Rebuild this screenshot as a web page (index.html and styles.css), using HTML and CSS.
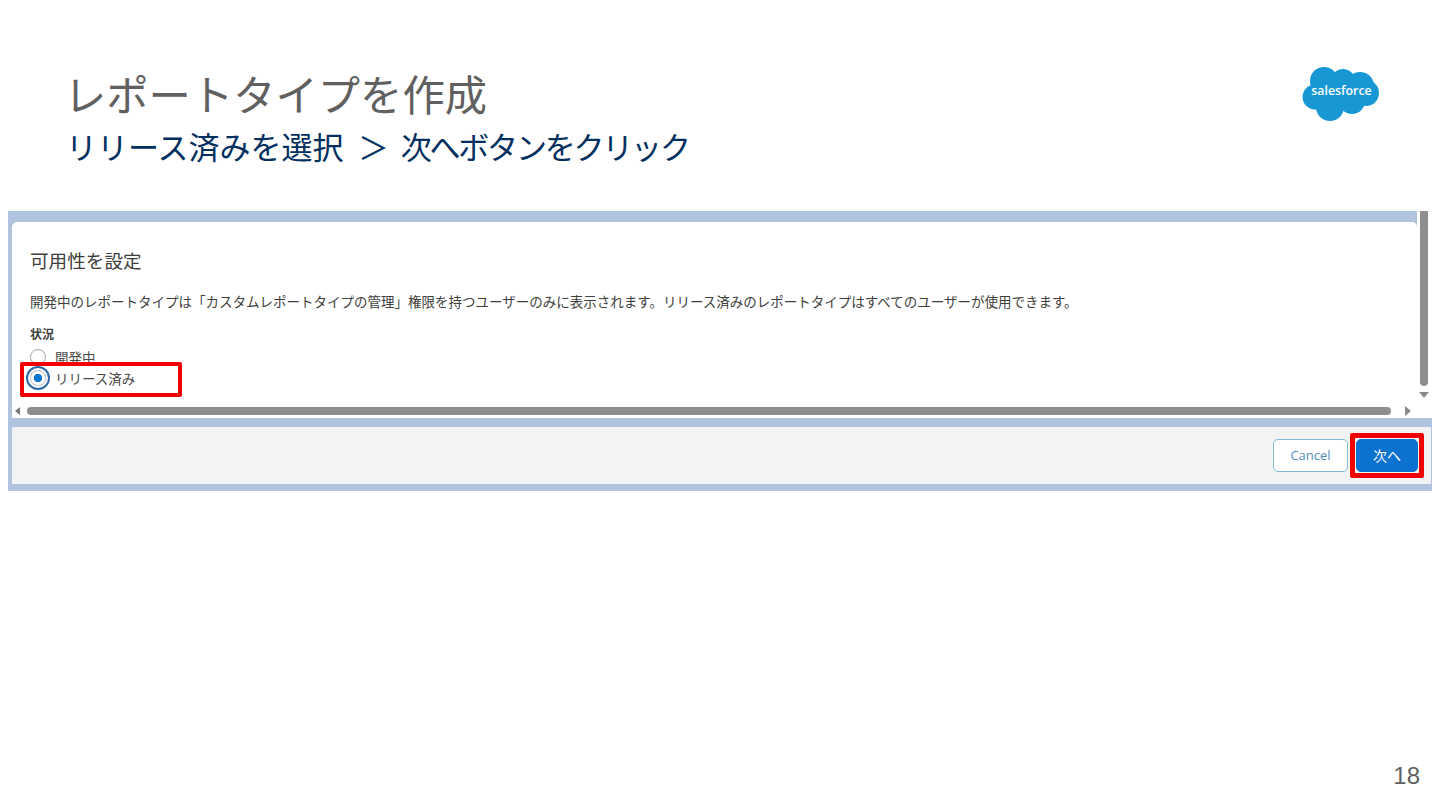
FILE: index.html
```html
<!DOCTYPE html>
<html lang="ja">
<head>
    <meta charset="UTF-8">
    <title>レポートタイプを作成</title>
    <link rel="stylesheet" href="styles.css">
</head>
<body>
    <div class="header">
        <div class="heading">
            <h1 class="title">レポートタイプを作成</h1>
            <div class="subtitle">リリース済みを選択 <span class="subtitle-sep">＞</span> <span class="subtitle-tight">次へボタンをクリック</span></div>
        </div>
        <!-- Logo -->
        <div class="logo">
            <svg class="logo-cloud" width="78" height="56" viewBox="0 0 78 56">
                <g fill="#1798d5">
                    <circle cx="22" cy="15" r="14"/>
                    <circle cx="41" cy="15" r="12"/>
                    <circle cx="58" cy="20" r="14"/>
                    <circle cx="13" cy="31" r="12.5"/>
                    <circle cx="28" cy="41" r="14"/>
                    <circle cx="50" cy="35" r="13"/>
                    <circle cx="64" cy="27" r="13"/>
                    <rect x="14" y="14" width="48" height="26"/>
                </g>
            </svg>
            <span class="logo-text">salesforce</span>
        </div>
    </div>

    <div class="panel">
        <div class="panel-top">
            <div class="panel-main">
                <div class="card">
                    <h2 class="card-title">可用性を設定</h2>
                    <p class="card-text">開発中のレポートタイプは「カスタムレポートタイプの管理」権限を持つユーザーのみに表示されます。リリース済みのレポートタイプはすべてのユーザーが使用できます。</p>
                    <div class="field-label">状況</div>
                    <div class="radio-row radio-row-first">
                        <span class="radio"></span>
                        <span class="radio-label">開発中</span>
                    </div>
                    <div class="radio-row">
                        <span class="radio radio-on"></span>
                        <span class="radio-label">リリース済み</span>
                    </div>
                    <div class="mark mark-radio"></div>
                </div>
                <div class="hscroll">
                    <span class="arrow-left"></span>
                    <span class="hscroll-thumb"></span>
                    <span class="arrow-right"></span>
                </div>
            </div>
            <div class="vscroll">
                <span class="vscroll-thumb"></span>
                <span class="arrow-down"></span>
            </div>
        </div>
        <div class="footer">
            <button class="btn btn-cancel">Cancel</button>
            <div class="next-wrap">
                <button class="btn btn-next">次へ</button>
            </div>
        </div>
    </div>

    <div class="page-num">18</div>
</body>
</html>
```

FILE: styles.css
```css
body {
    font-family: "Liberation Sans", "Noto Sans CJK JP", sans-serif;
    margin: 0;
    background: #ffffff;
    height: 810px;
    overflow: hidden;
    position: relative;
}
.header {
    display: flex;
    justify-content: space-between;
    align-items: flex-start;
    height: 211px;
    box-sizing: border-box;
    padding: 66px 60px 0 66px;
}
.title {
    margin: 3px 0 0 -2px;
    font-size: 42.3px;
    line-height: 56px;
    font-weight: normal;
    color: #606060;
}
.subtitle {
    font-size: 31px;
    line-height: 48px;
    color: #03305f;
    white-space: nowrap;
}
.subtitle-sep {
    margin: 0 3px 0 6px;
}
.subtitle-tight {
    letter-spacing: -2.2px;
}
.logo {
    position: relative;
    width: 78px;
    height: 56px;
}
.logo-cloud {
    display: block;
}
.logo-text {
    position: absolute;
    left: 1px;
    right: 0;
    top: 16px;
    text-align: center;
    font-family: "Open Sans", sans-serif;
    font-size: 12.4px;
    font-weight: 600;
    line-height: 18px;
    color: #ffffff;
}
.panel {
    margin-left: 8px;
    width: 1424px;
    height: 280px;
    background: #b0c4e0;
    display: flex;
    flex-direction: column;
    box-sizing: border-box;
}
.panel-top {
    display: flex;
    height: 207px;
    padding-left: 4px;
}
.panel-main {
    width: 1405px;
    padding-top: 11px;
    display: flex;
    flex-direction: column;
}
.card {
    position: relative;
    flex: 1;
    background: #ffffff;
    border-radius: 5px 5px 0 0;
    padding: 28px 18px 0 18px;
}
.card-title {
    margin: 0;
    font-size: 18.6px;
    line-height: 24px;
    font-weight: normal;
    color: #3e3e3c;
}
.card-text {
    margin: 19px 0 0 0;
    font-size: 13.5px;
    line-height: 20px;
    color: #3e3e3c;
    white-space: nowrap;
}
.field-label {
    margin-top: 13px;
    font-size: 12px;
    line-height: 18px;
    font-weight: bold;
    color: #3e3e3c;
}
.radio-row {
    display: flex;
    align-items: center;
    gap: 9px;
    height: 22px;
    font-size: 13.5px;
}
.radio-row-first {
    margin-top: 3px;
    height: 20px;
}
.radio {
    flex: none;
    width: 16px;
    height: 16px;
    box-sizing: border-box;
    border: 1px solid #a8a8a8;
    border-radius: 50%;
    background: #ffffff;
}
.radio-on {
    border-color: #c4ccd6;
    background: radial-gradient(circle, #0b78d0 0 4px, #ffffff 4.5px);
    box-shadow: 0 0 0 2px #ffffff, 0 0 0 4px #2a6aa8;
}
.radio-label {
    color: #4a4a4a;
}
.mark {
    position: absolute;
    box-sizing: border-box;
    border: 4px solid #f20000;
    border-radius: 2px;
}
.mark-radio {
    left: 8px;
    top: 140px;
    width: 162px;
    height: 35px;
}
.hscroll {
    display: flex;
    align-items: center;
    height: 14px;
    background: #ffffff;
    padding: 0 6px 0 3px;
    gap: 7px;
}
.hscroll-thumb {
    width: 1366px;
    height: 8px;
    background: #8e8e8e;
    border-radius: 4px;
}
.arrow-left {
    border: 4px solid transparent;
    border-left: 0;
    border-right: 5px solid #777777;
}
.arrow-right {
    margin-left: 7px;
    border: 5px solid transparent;
    border-right: 0;
    border-left: 6px solid #8a8a8a;
}
.vscroll {
    flex: 1;
    background: #ffffff;
    display: flex;
    flex-direction: column;
    align-items: center;
    padding: 0 5px 20px 0;
    margin-right: 1px;
    border-left: 2px solid #ffffff;
}
.vscroll-thumb {
    width: 8px;
    height: 177px;
    background: #8e8e8e;
    border-radius: 0 0 4px 4px;
}
.arrow-down {
    margin-top: 6px;
    border: 5px solid transparent;
    border-bottom: 0;
    border-top: 6px solid #8a8a8a;
}
.footer {
    margin: 9px 1px 7px 4px;
    height: 57px;
    background: #f3f3f3;
    display: flex;
    justify-content: flex-end;
    align-items: center;
    padding-right: 13px;
    gap: 8px;
}
.btn {
    height: 33px;
    border-radius: 5px;
    font-family: "Open Sans", "Noto Sans CJK JP", sans-serif;
    font-size: 13px;
    padding: 0;
    margin-top: -1px;
}
.btn-cancel {
    width: 75px;
    background: #ffffff;
    border: 1px solid #7fbcd4;
    color: #4f8fc0;
}
.next-wrap {
    position: relative;
}
.next-wrap:after {
    content: "";
    position: absolute;
    left: -6px;
    right: -6px;
    top: -7px;
    bottom: -6px;
    border: 5px solid #f20000;
    border-radius: 2px;
}
.btn-next {
    display: block;
    width: 62px;
    background: #0b72cf;
    border: 1px solid #0b72cf;
    color: #ffffff;
    font-size: 14px;
}
.page-num {
    position: absolute;
    right: 20px;
    bottom: 20px;
    font-size: 24px;
    line-height: 28px;
    color: #5f5f5f;
}
```
